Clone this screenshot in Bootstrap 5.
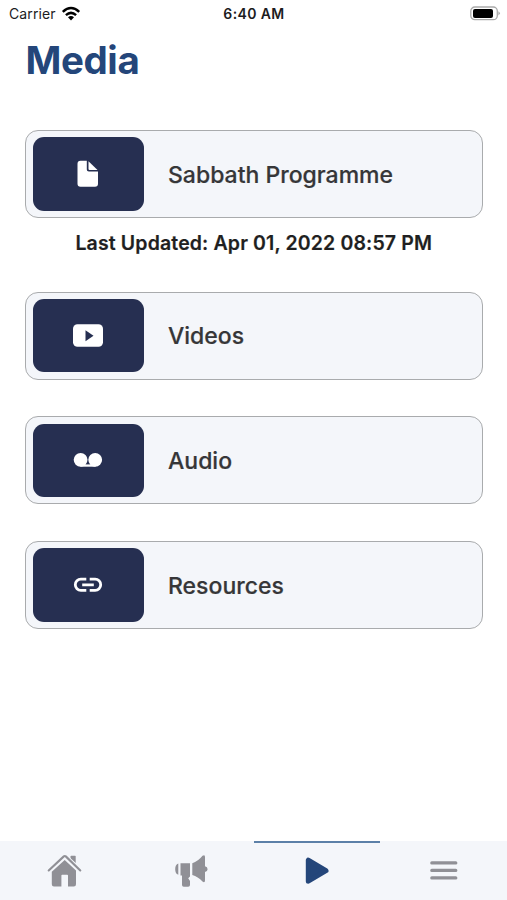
<!DOCTYPE html>
<html lang="en">
<head>
<meta charset="utf-8">
<meta name="viewport" content="width=device-width, initial-scale=1">
<title>Media</title>
<link href="https://cdn.jsdelivr.net/npm/bootstrap@5.3.0/dist/css/bootstrap.min.css" rel="stylesheet">
<style>
body{font-family:Inter,"Liberation Sans",sans-serif;height:900px;overflow:hidden;background:#fff}
.statusbar{height:28px;padding:0 6px 0 9px;color:#1c1c1e;font-size:14px;line-height:28px}
.statusbar > *{flex:1 1 0}
.carrier{letter-spacing:.1px}
.clock{font-weight:600;letter-spacing:.4px;padding-right:2px}
.page-title{font-size:38.5px;line-height:48px;font-weight:700;color:#24467a;margin:8px 0 46.2px;letter-spacing:-.4px;padding-left:.5px}
.media-list{padding:0 24.5px 0 25px}
.media-item{height:88px;padding:6px 7px;border:1px solid #a9abad;border-radius:13px;background:#f4f6fa;color:#363638;font-size:23px;font-weight:500;margin-bottom:36.7px}
.media-item.with-note{margin-bottom:0}
.item-label{padding-top:2px;-webkit-text-stroke:.2px currentColor}
.tile{width:111px;height:73.5px;border-radius:11px;background:#262f51;margin-right:24px}
.updated{height:73.5px;padding-top:10px;font-size:19.5px;line-height:31px;font-weight:600;color:#1f1f21;letter-spacing:.14px;-webkit-text-stroke:.2px currentColor}
.tabbar{height:59px;background:#f4f6fa}
.tab-link{border-top:2px solid transparent;color:#909096}
.tab-link svg{margin:-3px 0 0 1px}
.tab-link.active{border-color:#5c80a8;color:#24467a}
svg{display:block}
</style>
<script src="https://cdn.jsdelivr.net/npm/bootstrap@5.3.0/dist/js/bootstrap.bundle.min.js"></script>
</head>
<body class="d-flex flex-column">
<header class="statusbar d-flex">
  <div class="d-flex align-items-center"><span class="carrier">Carrier</span>
    <svg class="ms-1" width="22" height="18" viewBox="0 0 22 18"><g fill="none" stroke="#000" stroke-width="2.5"><path d="M2.8 6.8Q11 -.7 19.2 6.8"/><path d="M5.9 10.1Q11 5.7 16.1 10.1"/></g><path d="M8 12.2Q11 9.8 14 12.2L11 15.4Z"/></svg>
  </div>
  <div class="clock text-center">6:40 AM</div>
  <div class="d-flex justify-content-end align-items-center"><svg width="31" height="16" viewBox="0 0 31 16"><rect x=".8" y="1" width="26.5" height="12.7" rx="4" fill="#fff" stroke="#aaa" stroke-width="1.3"/><rect x="3" y="3" width="20" height="9" rx="2"/><path d="M28.4 5.2Q31.3 7.3 28.4 9.5Z" fill="#aaa"/></svg></div>
</header>
<main class="media-list flex-grow-1">
  <h1 class="page-title">Media</h1>
  <a class="media-item with-note d-flex align-items-center text-decoration-none" href="#">
    <span class="tile d-flex align-items-center justify-content-center"><svg width="40" height="40" viewBox="0 0 40 40" fill="#fff"><path d="M11.5 6.8H17.8V15.5Q17.8 17.6 19.9 17.6H29V29.8Q29 32.8 26 32.8H11.5Q8.5 32.8 8.5 29.8V9.8Q8.5 6.8 11.5 6.8Z"/><path d="M19.5 7.3 28.5 16H20.5Q19.5 16 19.5 15Z"/></svg></span>
    <span class="item-label">Sabbath Programme</span>
  </a>
  <div class="updated text-center"><span>Last Updated: Apr 01, 2022 08:57 PM</span></div>
  <a class="media-item d-flex align-items-center text-decoration-none" href="#">
    <span class="tile d-flex align-items-center justify-content-center"><svg width="40" height="40" viewBox="0 0 40 40"><rect x="4" y="8.3" width="30" height="22.5" rx="4.5" fill="#fff"/><path d="M16.5 14.2V25.2L24.5 19.7Z" fill="#262f51"/></svg></span>
    <span class="item-label">Videos</span>
  </a>
  <a class="media-item d-flex align-items-center text-decoration-none" href="#">
    <span class="tile d-flex align-items-center justify-content-center"><svg width="40" height="40" viewBox="0 0 40 40" fill="#fff"><circle cx="11.6" cy="19.8" r="6.9"/><circle cx="26.2" cy="19.8" r="6.9"/><path d="M11.5 24.4H26.5V26.7H11.5Z"/></svg></span>
    <span class="item-label">Audio</span>
  </a>
  <a class="media-item d-flex align-items-center text-decoration-none" href="#">
    <span class="tile d-flex align-items-center justify-content-center"><svg width="40" height="40" viewBox="0 0 40 40" fill="none" stroke="#fff" stroke-width="2.8"><path d="M17.3 14.2H11.9A5.6 5.6 0 0 0 11.9 25.4H17.3M20.7 14.2H26.1A5.6 5.6 0 0 1 26.1 25.4H20.7M13.2 19.8H24.8"/></svg></span>
    <span class="item-label">Resources</span>
  </a>
</main>
<nav class="tabbar d-flex">
  <a class="tab-link flex-fill d-flex align-items-center justify-content-center" href="#" aria-label="Home"><svg width="40" height="40" viewBox="0 0 40 40" fill="currentColor"><path d="M26.5 6.5Q26.5 5.8 27.2 5.8H31Q31.7 5.8 31.7 6.5V15.5L26.5 10.5Z"/><path d="M4.5 20.5 20.5 6 36.5 20.5" fill="none" stroke="#f4f6fa" stroke-width="5"/><path d="M4.7 20.5 19.8 6.4Q20.8 5.6 21.8 6.4L36.3 20.5" fill="none" stroke="currentColor" stroke-width="2.1" stroke-linecap="round"/><path d="M20.7 10 32 20.5V34.3Q32 36.5 29.8 36.5H24V25.6Q24 24.8 23.2 24.8H18.2Q17.4 24.8 17.4 25.6V36.5H10Q7.8 36.5 7.8 34.3V21.8Z"/></svg></a>
  <a class="tab-link flex-fill d-flex align-items-center justify-content-center" href="#" aria-label="Announcements"><svg width="40" height="40" viewBox="0 0 40 40" fill="currentColor"><path d="M7.3 13.5V24.8Q4.2 23.8 4.2 19.2 4.2 14.5 7.3 13.5ZM9.5 13.3H19V26.5L17.2 28.3 19 31V35Q19 36.8 17.2 36.8H12.8Q11 36.8 11 35V25.6H9.5Z"/><path d="M21.3 13.2Q27 11.5 31.5 5.8Q34 4 34 7V16.3Q36.6 16.8 36.6 19.2 36.6 21.5 34 22V30.3Q34 33.2 31.5 31.6Q27 26.5 21.3 25Z"/></svg></a>
  <a class="tab-link active flex-fill d-flex align-items-center justify-content-center" href="#" aria-label="Media"><svg width="40" height="40" viewBox="0 0 40 40" fill="currentColor" stroke="currentColor" stroke-width="5" stroke-linejoin="round"><path d="M11.3 10.2V31.2L29 20.7Z"/></svg></a>
  <a class="tab-link flex-fill d-flex align-items-center justify-content-center" href="#" aria-label="Menu"><svg width="40" height="40" viewBox="0 0 40 40" stroke="currentColor" stroke-width="3.2" stroke-linecap="round"><path d="M7.8 12.9H31.8M7.8 20.4H31.8M7.8 27.9H31.8"/></svg></a>
</nav>
</body>
</html>
